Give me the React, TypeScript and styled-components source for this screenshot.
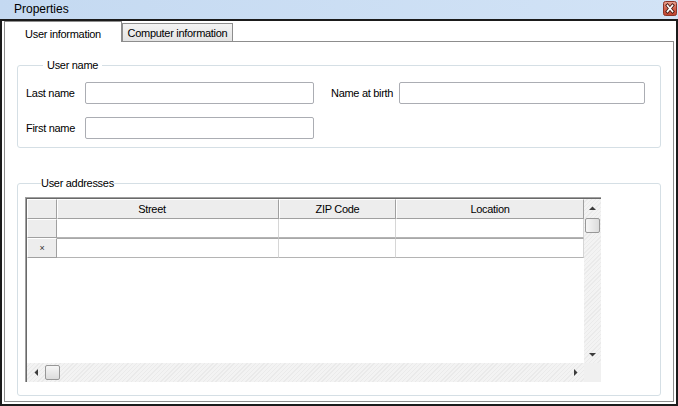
import styled, { createGlobalStyle } from 'styled-components'

const GlobalStyle = createGlobalStyle`
  html, body {
    margin: 0;
    padding: 0;
    background: #ffffff;
  }
  body {
    font-family: "Liberation Sans", Arial, sans-serif;
    font-size: 11px;
    letter-spacing: -0.3px;
    color: #000000;
    overflow: hidden;
  }
  * {
    box-sizing: border-box;
  }
`

const COLUMNS = [
  { label: 'Street', width: 222, shift: 32 },
  { label: 'ZIP Code', width: 117, shift: 0 },
  { label: 'Location', width: 188, shift: 0 },
]

const ROWS = [{ marker: '' }, { marker: '×' }]

function CloseGlyph() {
  return (
    <svg width="14" height="15" viewBox="0 0 14 15">
      <defs>
        <linearGradient id="closeFill" x1="0" y1="0" x2="0" y2="1">
          <stop offset="0" stopColor="#eaa493" />
          <stop offset="0.5" stopColor="#d0614c" />
          <stop offset="1" stopColor="#c0432e" />
        </linearGradient>
      </defs>
      <rect x="0.5" y="0.5" width="13" height="14" rx="2" fill="url(#closeFill)" stroke="#8b3426" />
      <path d="M4.5 4.5 L9.5 10.5 M9.5 4.5 L4.5 10.5" stroke="#4a1d16" strokeWidth="3.4" strokeLinecap="square" />
      <path d="M4.5 4.5 L9.5 10.5 M9.5 4.5 L4.5 10.5" stroke="#ffffff" strokeWidth="1.6" strokeLinecap="square" />
    </svg>
  )
}

type Dir = 'up' | 'down' | 'left' | 'right'

const ARROWS: Record<Dir, string> = {
  up: '0,4 7,4 3.5,0.5',
  down: '0,0 7,0 3.5,3.5',
  left: '4,0 4,7 0.5,3.5',
  right: '0,0 0,7 3.5,3.5',
}

function Arrow({ dir }: { dir: Dir }) {
  const vertical = dir === 'up' || dir === 'down'
  return (
    <svg width={vertical ? 7 : 4} height={vertical ? 4 : 7}>
      <polygon points={ARROWS[dir]} fill="#3c3c3c" />
    </svg>
  )
}

export default function App() {
  return (
    <>
      <GlobalStyle />
      <Window>
        <TitleBar>
          <Title>Properties</Title>
          <CloseButton>
            <CloseGlyph />
          </CloseButton>
        </TitleBar>

        <Frame>
          <TabStrip>
            <Tab $active>User information</Tab>
            <Tab>Computer information</Tab>
          </TabStrip>

          <Panel>
            <GroupBox $top={16}>
              <Legend $offset={25} $pad={4}>User name</Legend>
              <FieldGrid>
                <FieldLabel>Last name</FieldLabel>
                <TextBox />
                <FieldLabel $inset>Name at birth</FieldLabel>
                <TextBox />
                <FieldLabel>First name</FieldLabel>
                <TextBox />
              </FieldGrid>
            </GroupBox>

            <GroupBox $top={28}>
              <Legend $offset={23} $pad={0}>User addresses</Legend>
              <GridFrame>
                <GridBody>
                  <Table>
                    <Row>
                      <HeaderCell />
                      {COLUMNS.map((col) => (
                        <HeaderCell key={col.label} $shift={col.shift}>
                          {col.label}
                        </HeaderCell>
                      ))}
                    </Row>
                    {ROWS.map((row, i) => (
                      <Row key={i}>
                        <RowHeader $newRow={i > 0}>{row.marker}</RowHeader>
                        {COLUMNS.map((col) => (
                          <DataCell key={col.label} $newRow={i > 0} />
                        ))}
                      </Row>
                    ))}
                  </Table>

                  <VScroll>
                    <ArrowButton>
                      <Arrow dir="up" />
                    </ArrowButton>
                    <Thumb $vertical />
                    <Track />
                    <ArrowButton>
                      <Arrow dir="down" />
                    </ArrowButton>
                  </VScroll>

                  <HScroll>
                    <ArrowButton>
                      <Arrow dir="left" />
                    </ArrowButton>
                    <Thumb />
                    <Track />
                    <ArrowButton>
                      <Arrow dir="right" />
                    </ArrowButton>
                  </HScroll>

                  <Corner />
                </GridBody>
              </GridFrame>
            </GroupBox>
          </Panel>
        </Frame>
      </Window>
    </>
  )
}

const Window = styled.div`
  width: 678px;
  height: 406px;
  display: flex;
  flex-direction: column;
  background: #ffffff;
`

const TitleBar = styled.div`
  height: 19px;
  flex: none;
  display: flex;
  align-items: flex-start;
  justify-content: space-between;
  padding: 0 1px 0 14px;
  background: linear-gradient(to right, #c4d9f1, #d2e3f6);
`

const Title = styled.span`
  font-size: 12px;
  line-height: 19px;
  letter-spacing: 0;
`

const CloseButton = styled.div`
  margin-top: 1px;
  width: 14px;
  height: 15px;
  display: flex;
`

const Frame = styled.div`
  flex: 1;
  min-height: 0;
  display: flex;
  flex-direction: column;
  border: 2px solid #1b1b1b;
  padding: 0 2px 2px;
`

const TabStrip = styled.div`
  height: 20px;
  flex: none;
  display: flex;
  align-items: flex-end;
`

const Tab = styled.div<{ $active?: boolean }>`
  position: relative;
  z-index: 1;
  display: flex;
  align-items: center;
  justify-content: center;
  border: 1px solid #8d8d8d;
  border-bottom: none;
  white-space: nowrap;
  font-size: 11px;
  width: ${({ $active }) => ($active ? 118 : 111)}px;
  height: ${({ $active }) => ($active ? 21 : 18)}px;
  margin-bottom: ${({ $active }) => ($active ? -1 : 0)}px;
  padding-top: ${({ $active }) => ($active ? 3 : 0)}px;
  background: ${({ $active }) =>
    $active ? '#ffffff' : 'linear-gradient(#f3f3f3, #e4e4e4)'};
`

const Panel = styled.div`
  flex: 1;
  min-height: 0;
  display: flex;
  flex-direction: column;
  border: 1px solid #8d8d8d;
  background: #ffffff;
  padding: 0 12px;
`

const GroupBox = styled.fieldset<{ $top: number }>`
  margin: ${({ $top }) => $top}px 0 0;
  padding: 0;
  min-width: 0;
  border: 1px solid #d5dfe5;
  border-radius: 3px;
`

const Legend = styled.legend<{ $offset: number; $pad: number }>`
  margin-left: ${({ $offset }) => $offset}px;
  padding: 0 ${({ $pad }) => $pad}px;
  font-size: 11px;
  line-height: 14px;
`

const FieldGrid = styled.div`
  display: grid;
  grid-template-columns: 59px 229px 85px 246px;
  row-gap: 13px;
  align-items: center;
  padding: 10px 0 8px 8px;
`

const FieldLabel = styled.label<{ $inset?: boolean }>`
  padding-left: ${({ $inset }) => ($inset ? 17 : 0)}px;
  white-space: nowrap;
  font-size: 11px;
`

const TextBox = styled.input`
  width: 100%;
  height: 22px;
  margin: 0;
  padding: 0 3px;
  border: 1px solid #abadb3;
  border-radius: 2px;
  background: #ffffff;
  font: inherit;
  outline: none;
`

const GridFrame = styled.div`
  width: 576px;
  height: 185px;
  margin: 7px 0 13px 7px;
  border-top: 1px solid #a0a0a0;
  border-left: 1px solid #a0a0a0;
`

const GridBody = styled.div`
  height: 100%;
  display: grid;
  grid-template-columns: 1fr 17px;
  grid-template-rows: 1fr 19px;
  border-top: 1px solid #696969;
  border-left: 1px solid #696969;
  background: #ffffff;
`

const Table = styled.div`
  overflow: hidden;
  display: flex;
  flex-direction: column;
`

const Row = styled.div`
  display: grid;
  grid-template-columns: 30px ${COLUMNS.map((c) => `${c.width}px`).join(' ')};
`

const raised = `
  background: #ededed;
  border: 1px solid;
  border-color: #ffffff #a0a0a0 #a0a0a0 #ffffff;
`

const HeaderCell = styled.div<{ $shift?: number }>`
  ${raised}
  height: 20px;
  display: flex;
  align-items: center;
  justify-content: center;
  padding-right: ${({ $shift }) => $shift ?? 0}px;
  font-size: 11px;
`

const RowHeader = styled.div<{ $newRow?: boolean }>`
  ${raised}
  height: ${({ $newRow }) => ($newRow ? 20 : 19)}px;
  display: flex;
  align-items: center;
  justify-content: center;
  font-size: 9px;
  color: #333333;
`

const DataCell = styled.div<{ $newRow?: boolean }>`
  height: ${({ $newRow }) => ($newRow ? 20 : 19)}px;
  background: #ffffff;
  border-right: 1px solid #d6d6d6;
  border-bottom: 1px solid #b4b4b4;
  border-top: ${({ $newRow }) => ($newRow ? '1px solid #a8a8a8' : 'none')};
`

const hatch = `
  background: repeating-linear-gradient(
    -45deg,
    #f3f3f3 0px,
    #f3f3f3 2px,
    #eaeaea 2px,
    #eaeaea 3px
  );
`

const VScroll = styled.div`
  ${hatch}
  display: flex;
  flex-direction: column;
  align-items: center;
`

const HScroll = styled.div`
  ${hatch}
  display: flex;
  align-items: center;
`

const ArrowButton = styled.div`
  width: 17px;
  height: 17px;
  flex: none;
  display: flex;
  align-items: center;
  justify-content: center;
`

const Thumb = styled.div<{ $vertical?: boolean }>`
  flex: none;
  width: 15px;
  height: 15px;
  margin: ${({ $vertical }) => ($vertical ? '2px 0 0' : '0 0 0 1px')};
  border: 1px solid #979797;
  border-radius: 2px;
  background: linear-gradient(
    ${({ $vertical }) => ($vertical ? 'to right' : 'to bottom')},
    #f6f6f6,
    #dcdcdc
  );
`

const Track = styled.div`
  flex: 1;
`

const Corner = styled.div`
  background: #f0f0f0;
`
